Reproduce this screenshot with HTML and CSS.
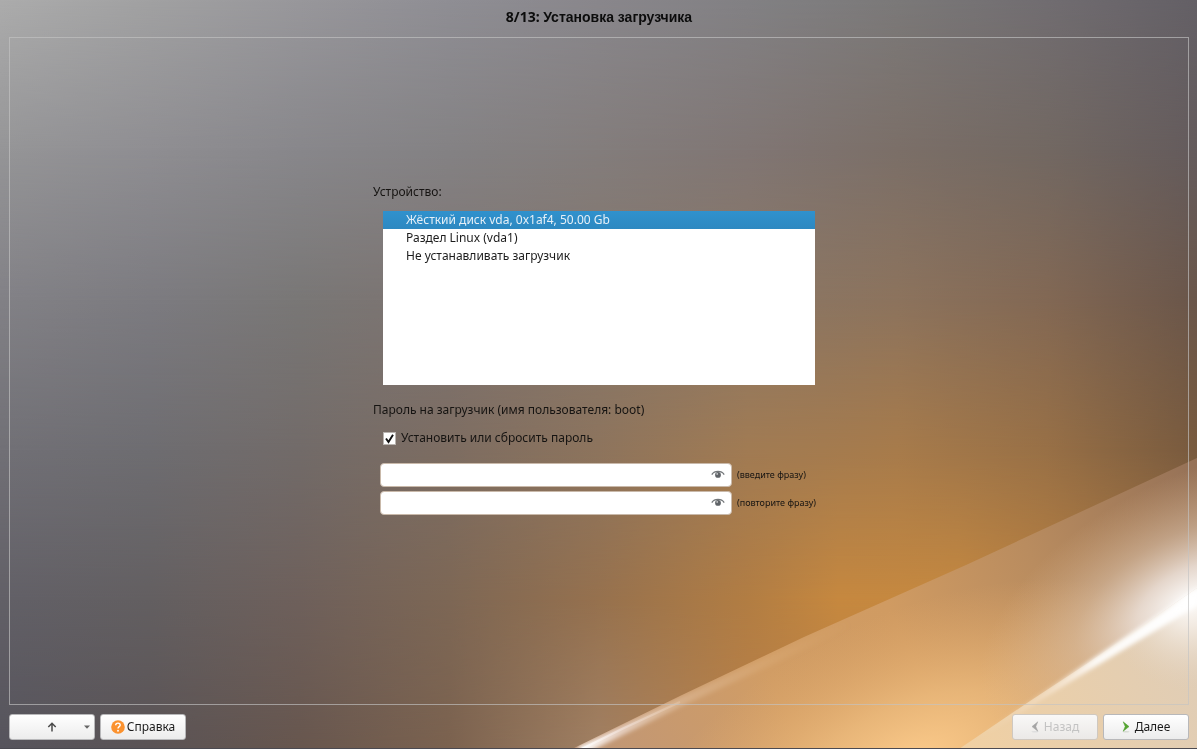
FILE: index.html
```
<!DOCTYPE html>
<html lang="ru">
<head>
<meta charset="utf-8">
<title>Установка загрузчика</title>
<link rel="stylesheet" href="styles.css">
</head>
<body>
<svg class="wallpaper" viewBox="0 0 1197 749" preserveAspectRatio="none" aria-hidden="true">
  <defs>
    <linearGradient id="r0"><stop offset="0" stop-color="#acacac"/><stop offset=".125" stop-color="#a1a1a2"/><stop offset=".25" stop-color="#98979b"/><stop offset=".375" stop-color="#8f8e94"/><stop offset=".5" stop-color="#89878c"/><stop offset=".625" stop-color="#828184"/><stop offset=".75" stop-color="#7b7979"/><stop offset=".875" stop-color="#716d71"/><stop offset="1" stop-color="#646066"/></linearGradient>
    <linearGradient id="r1"><stop offset="0" stop-color="#959597"/><stop offset=".125" stop-color="#8f8e92"/><stop offset=".25" stop-color="#88878b"/><stop offset=".375" stop-color="#848284"/><stop offset=".5" stop-color="#837d7c"/><stop offset=".625" stop-color="#807674"/><stop offset=".75" stop-color="#7b6f68"/><stop offset=".875" stop-color="#726862"/><stop offset="1" stop-color="#645b5c"/></linearGradient>
    <linearGradient id="r2"><stop offset="0" stop-color="#828186"/><stop offset=".125" stop-color="#7c7b80"/><stop offset=".25" stop-color="#797776"/><stop offset=".375" stop-color="#7d7370"/><stop offset=".5" stop-color="#84766b"/><stop offset=".625" stop-color="#8b7765"/><stop offset=".75" stop-color="#8c735d"/><stop offset=".875" stop-color="#826854"/><stop offset="1" stop-color="#6a564a"/></linearGradient>
    <linearGradient id="r3"><stop offset="0" stop-color="#717076"/><stop offset=".125" stop-color="#6e6d71"/><stop offset=".25" stop-color="#726b69"/><stop offset=".375" stop-color="#7d6d62"/><stop offset=".5" stop-color="#8d745d"/><stop offset=".625" stop-color="#a17b53"/><stop offset=".75" stop-color="#a77b4b"/><stop offset=".875" stop-color="#987046"/><stop offset="1" stop-color="#785a3e"/></linearGradient>
    <linearGradient id="r4"><stop offset="0" stop-color="#626067"/><stop offset=".125" stop-color="#635f61"/><stop offset=".25" stop-color="#6e605b"/><stop offset=".375" stop-color="#7d6755"/><stop offset=".5" stop-color="#96714e"/><stop offset=".625" stop-color="#b27d43"/><stop offset=".7" stop-color="#c6883f"/><stop offset=".8" stop-color="#c68940"/><stop offset="1" stop-color="#a07040"/></linearGradient>
    <linearGradient id="r5"><stop offset="0" stop-color="#56545c"/><stop offset=".125" stop-color="#5a5355"/><stop offset=".25" stop-color="#67564e"/><stop offset=".375" stop-color="#7b624f"/><stop offset=".5" stop-color="#a18063"/><stop offset=".625" stop-color="#b88048"/><stop offset="1" stop-color="#c08040"/></linearGradient>
    <linearGradient id="fade" x2="0" y2="1"><stop offset="0" stop-color="#000"/><stop offset="1" stop-color="#fff"/></linearGradient>
    <mask id="m1" maskUnits="userSpaceOnUse" x="0" y="0" width="1197" height="749"><rect width="1197" height="150" fill="url(#fade)"/><rect y="150" width="1197" height="600" fill="#fff"/></mask>
    <mask id="m2" maskUnits="userSpaceOnUse" x="0" y="0" width="1197" height="749"><rect y="150" width="1197" height="150" fill="url(#fade)"/><rect y="300" width="1197" height="450" fill="#fff"/></mask>
    <mask id="m3" maskUnits="userSpaceOnUse" x="0" y="0" width="1197" height="749"><rect y="300" width="1197" height="150" fill="url(#fade)"/><rect y="450" width="1197" height="300" fill="#fff"/></mask>
    <mask id="m4" maskUnits="userSpaceOnUse" x="0" y="0" width="1197" height="749"><rect y="450" width="1197" height="150" fill="url(#fade)"/><rect y="600" width="1197" height="150" fill="#fff"/></mask>
    <mask id="m5" maskUnits="userSpaceOnUse" x="0" y="0" width="1197" height="749"><rect y="600" width="1197" height="150" fill="url(#fade)"/></mask>
    <linearGradient id="veil" gradientUnits="userSpaceOnUse" x1="576" y1="749" x2="1197" y2="458"><stop offset="0" stop-color="#bf9677"/><stop offset=".3" stop-color="#d19d65"/><stop offset=".5" stop-color="#d09b62"/><stop offset=".72" stop-color="#b98c5f"/><stop offset="1" stop-color="#957157"/></linearGradient>
    <radialGradient id="amber" gradientUnits="userSpaceOnUse" cx="0" cy="0" r="1" gradientTransform="translate(910 765) rotate(-25) scale(300 150)"><stop offset="0" stop-color="#fdcc8c"/><stop offset=".4" stop-color="#f0be7f" stop-opacity=".75"/><stop offset="1" stop-color="#e5ac6c" stop-opacity="0"/></radialGradient>
    <radialGradient id="glow" gradientUnits="userSpaceOnUse" cx="0" cy="0" r="1" gradientTransform="translate(1190 600) rotate(-28) scale(230 120)"><stop offset="0" stop-color="#fff"/><stop offset=".25" stop-color="#f0e6df" stop-opacity=".85"/><stop offset=".55" stop-color="#e0c8b0" stop-opacity=".5"/><stop offset="1" stop-color="#dab58e" stop-opacity="0"/></radialGradient>
    <linearGradient id="sand" gradientUnits="userSpaceOnUse" x1="970" y1="749" x2="1197" y2="640"><stop offset="0" stop-color="#f0d0a3"/><stop offset="1" stop-color="#dfcdb7"/></linearGradient>
    <radialGradient id="shine" gradientUnits="userSpaceOnUse" cx="1190" cy="600" r="90"><stop offset="0" stop-color="#fff"/><stop offset=".3" stop-color="#f6f0ea" stop-opacity=".8"/><stop offset="1" stop-color="#e3d2bf" stop-opacity="0"/></radialGradient>
    <linearGradient id="beam" gradientUnits="userSpaceOnUse" x1="1197" y1="594" x2="975" y2="746"><stop offset="0" stop-color="#fff"/><stop offset=".45" stop-color="#fff" stop-opacity=".9"/><stop offset=".7" stop-color="#fff0e2" stop-opacity=".4"/><stop offset="1" stop-color="#fff0e2" stop-opacity="0"/></linearGradient>
    <linearGradient id="streak" gradientUnits="userSpaceOnUse" x1="580" y1="749" x2="850" y2="622"><stop offset="0" stop-color="#fff"/><stop offset=".15" stop-color="#f0e0d8" stop-opacity=".75"/><stop offset=".4" stop-color="#e4c4a4" stop-opacity=".45"/><stop offset="1" stop-color="#e0ac70" stop-opacity="0"/></linearGradient>
    <filter id="soft" x="-20%" y="-20%" width="140%" height="140%"><feGaussianBlur stdDeviation="2"/></filter>
    <clipPath id="below"><path d="M1197 458 966 565 804 637 682 695 572 749H1197Z"/></clipPath>
    <clipPath id="corner"><path d="M1197 588 1088 663 1027 703 959 749H1197Z"/></clipPath>
  </defs>
  <rect width="1197" height="749" fill="url(#r0)"/>
  <rect width="1197" height="749" fill="url(#r1)" mask="url(#m1)"/>
  <rect width="1197" height="749" fill="url(#r2)" mask="url(#m2)"/>
  <rect width="1197" height="749" fill="url(#r3)" mask="url(#m3)"/>
  <rect width="1197" height="749" fill="url(#r4)" mask="url(#m4)"/>
  <rect width="1197" height="749" fill="url(#r5)" mask="url(#m5)"/>
  <g clip-path="url(#below)">
    <rect x="560" y="450" width="637" height="299" fill="url(#veil)"/>
    <rect x="560" y="450" width="637" height="299" fill="url(#amber)"/>
    <rect x="900" y="450" width="297" height="299" fill="url(#glow)"/>
    <path d="M580 751 682 701 804 645 860 618" fill="none" stroke="url(#streak)" stroke-width="9" filter="url(#soft)"/>
    <path d="M582 749 622 729 680 702" fill="none" stroke="url(#streak)" stroke-width="2"/>
  </g>
  <g clip-path="url(#corner)">
    <rect x="950" y="580" width="247" height="169" fill="url(#sand)"/>
    <rect x="1050" y="580" width="147" height="169" fill="url(#shine)"/>
  </g>
  <path d="M1200 587 1088 662 965 746 1088 671 1200 604Z" fill="url(#beam)" filter="url(#soft)"/>
  <path d="M0 748.500H1197" stroke="#4b4a51"/>
</svg>

<form class="installer" onsubmit="return false">
  <h1 class="title">8/13: <span class="title-name">Установка загрузчика</span></h1>
  <main class="frame">
    <div class="step">
      <label class="caption" for="device">Устройство:</label>
      <select class="devices" id="device" size="9">
        <option selected>Жёсткий диск vda, 0x1af4, 50.00 Gb</option>
        <option>Раздел Linux (vda1)</option>
        <option>Не устанавливать загрузчик</option>
      </select>
      <p class="caption">Пароль на загрузчик (имя пользователя: boot)</p>
      <label class="reset"><input class="tick" type="checkbox" checked>Установить или сбросить пароль</label>
      <div class="passwords">
        <div class="field">
          <input class="entry" id="pass" type="password">
          <button class="reveal" type="button" aria-label="Показать"><svg viewBox="0 0 14 10"><path d="M.8 4.600C3.500.4 10.500.4 13.200 4.600" fill="none" stroke="#73777a" stroke-width="1.300"/><circle cx="7" cy="4.900" r="2.900" fill="#5f6367"/><circle cx="6.200" cy="3.900" r=".9" fill="#c9cbcd"/></svg></button>
        </div>
        <label class="hint" for="pass">(введите фразу)</label>
        <div class="field">
          <input class="entry" id="repeat" type="password">
          <button class="reveal" type="button" aria-label="Показать"><svg viewBox="0 0 14 10"><path d="M.8 4.600C3.500.4 10.500.4 13.200 4.600" fill="none" stroke="#73777a" stroke-width="1.300"/><circle cx="7" cy="4.900" r="2.900" fill="#5f6367"/><circle cx="6.200" cy="3.900" r=".9" fill="#c9cbcd"/></svg></button>
        </div>
        <label class="hint" for="repeat">(повторите фразу)</label>
      </div>
    </div>
  </main>
  <footer class="actions">
    <button class="btn menu" type="button" aria-label="Меню">
      <svg class="arrow" viewBox="0 0 10 10"><path d="M5 9.500V1.500M1.300 5 5 1.300 8.700 5" fill="none" stroke="#4a4a4a" stroke-width="1.500"/></svg>
      <svg class="caret" viewBox="0 0 6 4"><path d="M0 .5H6L3 3.700Z" fill="#666"/></svg>
    </button>
    <button class="btn" type="button"><svg class="help" viewBox="0 0 14 14"><circle cx="7" cy="7" r="6.800" fill="#fb922f"/><path d="M4.700 5.200C4.800 2.400 9.300 2.500 9.200 5.100 9.100 6.700 7 6.700 7 8.500" fill="none" stroke="#fff" stroke-width="1.400"/><circle cx="7" cy="10.700" r=".95" fill="#fff"/></svg>Справка</button>
    <button class="btn back" type="button" disabled><svg class="chevron" viewBox="0 0 8 12"><ellipse cx="4" cy="10.700" rx="3.500" ry=".8" fill="#ddd"/><path d="M6.800.8 1 5.600 6.800 10.200 4.800 5.600Z" fill="#a5a5a5" stroke="#a5a5a5" stroke-width=".5"/></svg>Назад</button>
    <button class="btn" type="submit"><svg class="chevron" viewBox="0 0 8 12"><ellipse cx="4" cy="10.700" rx="3.500" ry=".8" fill="#d5d9d2"/><path d="M1.200.8 7 5.600 1.200 10.200 3.200 5.600Z" fill="#55a630" stroke="#4c9a2c" stroke-width=".5"/></svg>Далее</button>
  </footer>
</form>
</body>
</html>
```
FILE: styles.css
```
* { box-sizing: border-box; }

body {
  margin: 0;
  color: #161412;
  font: 12px/18px "Noto Sans", "Open Sans", sans-serif;
}

button, input, select { font: inherit; }

.wallpaper {
  position: fixed;
  inset: 0;
  z-index: -1;
  width: 100%;
  height: 100%;
}

.installer {
  display: flex;
  flex-direction: column;
  min-height: 100vh;
  padding: 8px 8px 9px 9px;
}

.title {
  margin: 0 0 11px;
  color: #0c0c0c;
  font-size: 14px;
  line-height: 18px;
  text-align: center;
}

.title-name { font-family: "Liberation Sans", sans-serif; }

.frame {
  display: flex;
  flex: 1;
  align-items: center;
  justify-content: center;
  padding-bottom: 44px;
  border: 1px solid rgba(195, 195, 195, .65);
}

.step {
  display: flex;
  flex-direction: column;
  width: 452px;
}

.caption { margin: 0; }

.devices {
  width: 432px;
  height: 174px;
  margin: 10px 0 16px 10px;
  padding: 0;
  overflow: hidden;
  border: 0;
  border-radius: 0;
  outline: 0;
  background: #fff;
  color: #1c1c1c;
}

.devices option {
  min-height: 18px;
  padding: 0 0 0 23px;
  line-height: 18px;
}

.devices option:checked {
  background: linear-gradient(#3091cd, #2d88c1);
  color: #e4eff7;
  -webkit-text-fill-color: #e4eff7;
}

.reset {
  display: flex;
  align-items: center;
  gap: 5px;
  margin: 10px 0 16px 10px;
}

.tick {
  width: 13px;
  height: 13px;
  margin: 0;
  border: 1px solid #b9b4b0;
  appearance: none;
  background: #fff url("data:image/svg+xml,%3Csvg xmlns='http://www.w3.org/2000/svg' viewBox='0 0 11 11'%3E%3Cpath d='M2 5.500 4.500 9 9 1.700' fill='none' stroke='%23111' stroke-width='1.900'/%3E%3C/svg%3E") center / 11px;
}

.passwords {
  display: grid;
  grid-template-columns: 352px 1fr;
  gap: 4px 5px;
  align-items: center;
  margin-left: 7px;
}

.field {
  display: flex;
  align-items: center;
  height: 24px;
  padding-right: 6px;
  border: 1px solid #c9b9aa;
  border-radius: 4px;
  background: #fff;
}

.entry {
  flex: 1;
  min-width: 0;
  padding: 0 6px;
  border: 0;
  outline: 0;
  background: none;
}

.reveal {
  display: flex;
  padding: 0;
  border: 0;
  background: none;
}

.reveal svg { width: 14px; height: 10px; }

.hint {
  font-size: 9px;
  white-space: nowrap;
}

.actions {
  display: flex;
  gap: 5px;
  margin-top: 9px;
}

.btn {
  display: flex;
  align-items: center;
  justify-content: center;
  gap: 2px;
  width: 86px;
  height: 26px;
  padding: 0;
  border: 1px solid #b8b8ba;
  border-radius: 3px;
  background: linear-gradient(#fff, #ececec);
  color: #1c1c1c;
}

.btn:disabled {
  border-color: #cfc8c0;
  background: linear-gradient(#f9f8f7, #ebe9e7);
  color: #c3c3c3;
}

.menu { justify-content: flex-end; gap: 27px; padding-right: 4px; }
.back { margin-left: auto; }
.arrow { width: 10px; height: 10px; }
.caret { width: 6px; height: 4px; }
.help { width: 14px; height: 14px; }
.chevron { width: 8px; height: 12px; margin-right: 3px; }
```
